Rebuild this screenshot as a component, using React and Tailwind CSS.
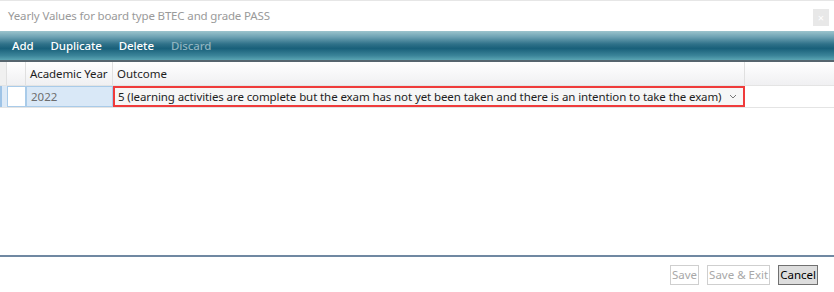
export default function App() {
  const font = { fontFamily: '"Noto Sans", "Open Sans", sans-serif' };
  return (
    <div className="w-[834px] h-[292px] bg-white flex flex-col overflow-hidden text-[11.5px] whitespace-nowrap" style={font}>
      {/* title bar */}
      <div className="h-[31px] border-t border-[#e6e6e6] flex items-center justify-between pl-[8px] pr-[5px]">
        <span className="text-[11.5px] text-[#9a9a9a] tracking-[-0.15px]">Yearly Values for board type BTEC and grade PASS</span>
        <div className="w-[16px] h-[17px] bg-[#e8e8e8] flex items-center justify-center text-white text-[11px] leading-none mt-[2px]">×</div>
      </div>
      {/* toolbar */}
      <div className="h-[31px] flex items-center gap-[17px] pl-[12px] text-white text-[11.5px] font-medium tracking-[-0.1px] border-b-2 border-[#56656e] bg-[linear-gradient(to_bottom,#9cc4cd_0%,#6fa3b4_20%,#2f7189_45%,#19607a_60%,#3b8499_85%,#5aa5b3_100%)]">
        <span>Add</span>
        <span>Duplicate</span>
        <span>Delete</span>
        <span className="text-[#8fb3bf]">Discard</span>
      </div>
      {/* grid */}
      <div className="flex-1 flex flex-col">
        <div className="h-[24px] flex bg-[linear-gradient(to_bottom,#ffffff,#f0f0f2)] border-b border-[#e4e4e4] text-[#1e1e1e]">
          <div className="w-[7px] bg-[#f0f0f0] border-r border-[#e0e0e0]"></div>
          <div className="w-[19px] border-r border-[#e0e0e0]"></div>
          <div className="w-[87px] border-r border-[#e0e0e0] flex items-center pl-[4px] tracking-[-0.1px]">Academic Year</div>
          <div className="w-[632px] border-r border-[#e0e0e0] flex items-center pl-[4px]">Outcome</div>
          <div className="flex-1"></div>
        </div>
        <div className="h-[22px] flex border-b border-[#e4e4e4]">
          <div className="w-[7px] bg-[#dce9f6] border-l-2 border-[#9ec3e6]"></div>
          <div className="w-[19px] bg-white border border-[#a9cbe9]"></div>
          <div className="w-[87px] bg-[#d9e8f7] border border-[#a9cbe9] flex items-center pl-[4px] text-[#6d6d6d]">2022</div>
          <div className="w-[632px] bg-[#f6f6f6] border-2 border-[#ef3b3b] flex items-center justify-between pl-[3px] pr-[6px] text-[#1e1e1e] overflow-hidden">
            <span className="tracking-[-0.1px]">5 (learning activities are complete but the exam has not yet been taken and there is an intention to take the exam)</span>
            <svg width="8" height="5" viewBox="0 0 8 5" className="mb-[1px] shrink-0"><path d="M1 1 L4 4 L7 1" fill="none" stroke="#777" strokeWidth="1" /></svg>
          </div>
          <div className="flex-1"></div>
        </div>
      </div>
      {/* footer */}
      <div className="h-[37px] border-t-2 border-[#7088a2] flex items-center justify-end gap-[8px] pr-[16px] pt-[1px]">
        <div className="h-[20px] px-[1px] border border-[#cfcfcf] text-[#a8a8a8] flex items-center">Save</div>
        <div className="h-[20px] px-[1px] border border-[#cfcfcf] text-[#a8a8a8] flex items-center">Save &amp; Exit</div>
        <div className="h-[20px] px-[1px] border border-[#707070] bg-[#dddddd] text-black flex items-center">Cancel</div>
      </div>
    </div>
  );
}
